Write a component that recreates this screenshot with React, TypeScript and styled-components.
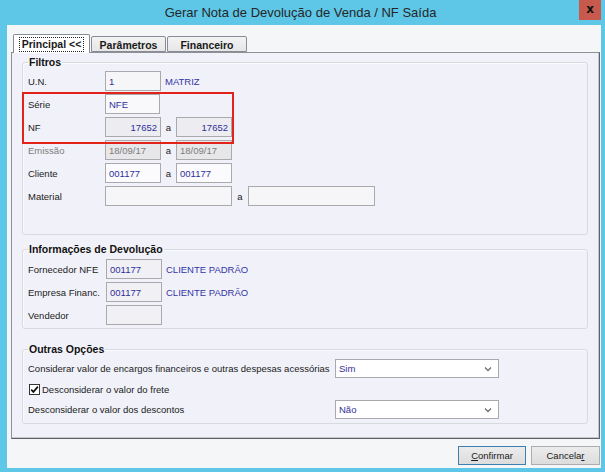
import { FC, ReactNode } from 'react';
import styled, { createGlobalStyle } from 'styled-components';

const GlobalStyle = createGlobalStyle`
  html, body {
    margin: 0;
    padding: 0;
    background: #ffffff;
  }
  body {
    font-family: "Liberation Sans", Arial, sans-serif;
    font-size: 9.5px;
    color: #1a1a1a;
  }
`;

interface FieldProps {
  value?: string;
  width: number;
  align?: 'left' | 'right';
  bg?: string;
  muted?: boolean;
}

const Field: FC<FieldProps> = ({ value = '', width, align = 'left', bg = '#f6f6f9', muted }) => (
  <Input readOnly value={value} $w={width} $align={align} $bg={bg} $muted={muted} />
);

const Combo: FC<{ value: string }> = ({ value }) => (
  <ComboBox>
    <span>{value}</span>
    <svg width="8" height="6" viewBox="0 0 8 6">
      <path d="M1 1.5 L4 4.5 L7 1.5" fill="none" stroke="#707070" strokeWidth="1.3" />
    </svg>
  </ComboBox>
);

const Row: FC<{ label: string; muted?: boolean; labelWidth?: number; children?: ReactNode }> = ({
  label,
  muted,
  labelWidth = 77,
  children,
}) => (
  <FormRow $lw={labelWidth}>
    <Label $muted={muted}>{label}</Label>
    <Fields>{children}</Fields>
  </FormRow>
);

const App: FC = () => {
  return (
    <>
      <GlobalStyle />
      <Window>
        <TitleBar>
          <span />
          <Title>Gerar Nota de Devolução de Venda / NF Saída</Title>
          <CloseButton>x</CloseButton>
        </TitleBar>
        <Body>
          <TabStrip>
            <Tab $active $w={77}>
              <TabFocus>Principal &lt;&lt;</TabFocus>
            </Tab>
            <Tab $w={75}>Parâmetros</Tab>
            <Tab $w={80}>Financeiro</Tab>
          </TabStrip>
          <Panel>
            <Group $mt={0}>
              <Legend>Filtros</Legend>
              <Rows $pt={2} $pb={28} $gap={3}>
                <Row label="U.N.">
                  <Field value="1" width={56} />
                  <Info>MATRIZ</Info>
                </Row>
                <Highlighted>
                  <Row label="Série">
                    <Field value="NFE" width={55} bg="#f9f9fb" />
                  </Row>
                  <Row label="NF">
                    <Field value="17652" width={56} align="right" bg="#ececf1" />
                    <Sep>a</Sep>
                    <Field value="17652" width={56} align="right" bg="#ececf1" />
                  </Row>
                </Highlighted>
                <Row label="Emissão" muted>
                  <Field value="18/09/17" width={56} bg="#e7e7e9" muted />
                  <Sep>a</Sep>
                  <Field value="18/09/17" width={56} bg="#e7e7e9" muted />
                </Row>
                <Row label="Cliente">
                  <Field value="001177" width={56} bg="#fbfbfd" />
                  <Sep>a</Sep>
                  <Field value="001177" width={56} bg="#fbfbfd" />
                </Row>
                <Row label="Material">
                  <Field width={127} />
                  <Sep $w={16}>a</Sep>
                  <Field width={127} />
                </Row>
              </Rows>
            </Group>

            <Group $mt={8}>
              <Legend>Informações de Devolução</Legend>
              <Rows $pt={3} $pb={3} $gap={3}>
                <Row label="Fornecedor NFE" labelWidth={78}>
                  <Field value="001177" width={56} bg="#f1f1f5" />
                  <Info>CLIENTE PADRÃO</Info>
                </Row>
                <Row label="Empresa Financ." labelWidth={78}>
                  <Field value="001177" width={56} bg="#f1f1f5" />
                  <Info>CLIENTE PADRÃO</Info>
                </Row>
                <Row label="Vendedor" labelWidth={78}>
                  <Field width={56} bg="#f1f1f5" />
                </Row>
              </Rows>
            </Group>

            <Group $mt={14}>
              <Legend>Outras Opções</Legend>
              <Rows $pt={3} $pb={4} $gap={1}>
                <OptionRow>
                  <Label>Considerar valor de encargos financeiros e outras despesas acessórias</Label>
                  <Combo value="Sim" />
                </OptionRow>
                <CheckRow>
                  <CheckBox>
                    <svg width="9" height="9" viewBox="0 0 9 9">
                      <path d="M1.2 4.6 L3.4 6.9 L7.9 1.6" fill="none" stroke="#111" strokeWidth="1.7" />
                    </svg>
                  </CheckBox>
                  <Label>Desconsiderar o valor do frete</Label>
                </CheckRow>
                <OptionRow>
                  <Label>Desconsiderar o valor dos descontos</Label>
                  <Combo value="Não" />
                </OptionRow>
              </Rows>
            </Group>
          </Panel>
          <ButtonBar>
            <Button $default $w={68}>
              <u>C</u>onfirmar
            </Button>
            <Button $w={69}>
              Cancela<u>r</u>
            </Button>
          </ButtonBar>
        </Body>
      </Window>
    </>
  );
};

const Window = styled.div`
  width: 605px;
  height: 472px;
  box-sizing: border-box;
  background: #5ec7e7;
  padding: 0 4px 4px 7px;
  display: flex;
  flex-direction: column;
`;

const TitleBar = styled.div`
  height: 25px;
  margin: 0 0 0 -7px;
  display: grid;
  grid-template-columns: 1fr auto 1fr;
  align-items: start;
`;

const Title = styled.div`
  font-size: 13px;
  line-height: 25px;
  color: #262626;
  white-space: nowrap;
`;

const CloseButton = styled.div`
  justify-self: end;
  width: 22px;
  height: 20px;
  background: #c75a4c;
  color: #111;
  font-weight: bold;
  font-size: 12px;
  line-height: 18px;
  text-align: center;
  font-family: "DejaVu Sans", sans-serif;
`;

const Body = styled.div`
  flex: 1;
  background: #f5f6f8;
  padding: 8px 1px 0 4px;
  display: flex;
  flex-direction: column;
`;

const TabStrip = styled.div`
  height: 19px;
  padding-left: 2px;
  display: flex;
  align-items: flex-end;
  gap: 1px;
`;

const Tab = styled.div<{ $active?: boolean; $w: number }>`
  position: relative;
  z-index: 1;
  box-sizing: border-box;
  width: ${(p) => p.$w}px;
  height: ${(p) => (p.$active ? 19 : 16)}px;
  margin-bottom: ${(p) => (p.$active ? -1 : 0)}px;
  border: 1px solid #898c95;
  border-bottom: ${(p) => (p.$active ? 'none' : '1px solid #898c95')};
  border-radius: 2px 2px 0 0;
  background: ${(p) => (p.$active ? '#ffffff' : 'linear-gradient(#f3f3f3, #e6e6e6)')};
  font-weight: bold;
  font-size: 10.5px;
  display: flex;
  align-items: center;
  justify-content: center;
  padding-top: ${(p) => (p.$active ? 0 : 1)}px;
`;

const TabFocus = styled.span`
  border: 1px dotted #202020;
  padding: 0 2px;
  line-height: 13px;
`;

const Panel = styled.div`
  box-sizing: border-box;
  height: 387px;
  background: #f1f2f9;
  border: 1px solid #8e9097;
  border-right-color: #5e6066;
  border-bottom-color: #5e6066;
  box-shadow: inset -1px -1px 0 #c6c8ce;
  padding: 3px 11px 0 10px;
  display: flex;
  flex-direction: column;
`;

const Group = styled.fieldset<{ $mt: number }>`
  margin: ${(p) => p.$mt}px 0 0 0;
  padding: 0;
  min-width: 0;
  border: 1px solid #d8dae2;
  border-radius: 3px;
  box-shadow: inset 1px 1px 0 #fbfbfe;
`;

const Legend = styled.legend`
  margin-left: 5px;
  padding: 0 1px;
  font-weight: bold;
  font-size: 10.5px;
  line-height: 13px;
  color: #111;
`;

const Rows = styled.div<{ $pt: number; $pb: number; $gap: number }>`
  padding: ${(p) => p.$pt}px 0 ${(p) => p.$pb}px 5px;
  display: flex;
  flex-direction: column;
  gap: ${(p) => p.$gap}px;
`;

/* the red annotation frame drawn over the Série / NF rows */
const Highlighted = styled.div`
  position: relative;
  display: flex;
  flex-direction: column;
  gap: 3px;

  &::after {
    content: '';
    position: absolute;
    left: -6px;
    top: -2px;
    width: 212px;
    height: 52px;
    box-sizing: border-box;
    border: 2px solid #e2231a;
    pointer-events: none;
  }
`;

const FormRow = styled.div<{ $lw: number }>`
  height: 20px;
  display: grid;
  grid-template-columns: ${(p) => p.$lw}px auto;
  align-items: center;
`;

const Label = styled.span<{ $muted?: boolean }>`
  color: ${(p) => (p.$muted ? '#7c7c7c' : '#1a1a1a')};
  white-space: nowrap;
`;

const Fields = styled.div`
  display: flex;
  align-items: center;
  height: 100%;
`;

const Input = styled.input<{ $w: number; $align: string; $bg: string; $muted?: boolean }>`
  box-sizing: border-box;
  width: ${(p) => p.$w}px;
  height: 20px;
  margin: 0;
  padding: 0 3px;
  border: 1px solid #a9a9ae;
  background: ${(p) => p.$bg};
  font-family: "Liberation Sans", Arial, sans-serif;
  font-size: 9.5px;
  color: ${(p) => (p.$muted ? '#7c7c7c' : '#30309a')};
  text-align: ${(p) => p.$align};
  outline: none;
`;

const Sep = styled.span<{ $w?: number }>`
  width: ${(p) => p.$w ?? 15}px;
  text-align: center;
  color: #1a1a1a;
`;

const Info = styled.span`
  margin-left: 4px;
  color: #3434a4;
`;

const OptionRow = styled.div`
  height: 19px;
  display: grid;
  grid-template-columns: 307px 164px;
  align-items: center;
`;

const CheckRow = styled.div`
  height: 20px;
  display: flex;
  align-items: center;
  gap: 2px;
  padding-left: 1px;
`;

const CheckBox = styled.div`
  box-sizing: border-box;
  width: 11px;
  height: 11px;
  border: 1px solid #333;
  background: #fff;
  display: flex;
  align-items: center;
  justify-content: center;
`;

const ComboBox = styled.div`
  box-sizing: border-box;
  height: 19px;
  border: 1px solid #a9a9ae;
  background: #fff;
  display: flex;
  align-items: center;
  justify-content: space-between;
  padding: 0 6px 0 3px;
  color: #30309a;
`;

const ButtonBar = styled.div`
  padding-top: 7px;
  display: flex;
  justify-content: flex-end;
  gap: 5px;
`;

const Button = styled.div<{ $default?: boolean; $w: number }>`
  box-sizing: border-box;
  width: ${(p) => p.$w}px;
  height: 19px;
  border: 1px solid ${(p) => (p.$default ? '#3c7fb1' : '#acacac')};
  background: linear-gradient(#ececec, #dcdcdc);
  display: flex;
  align-items: center;
  justify-content: center;
  color: #1a1a1a;
`;

export default App;
